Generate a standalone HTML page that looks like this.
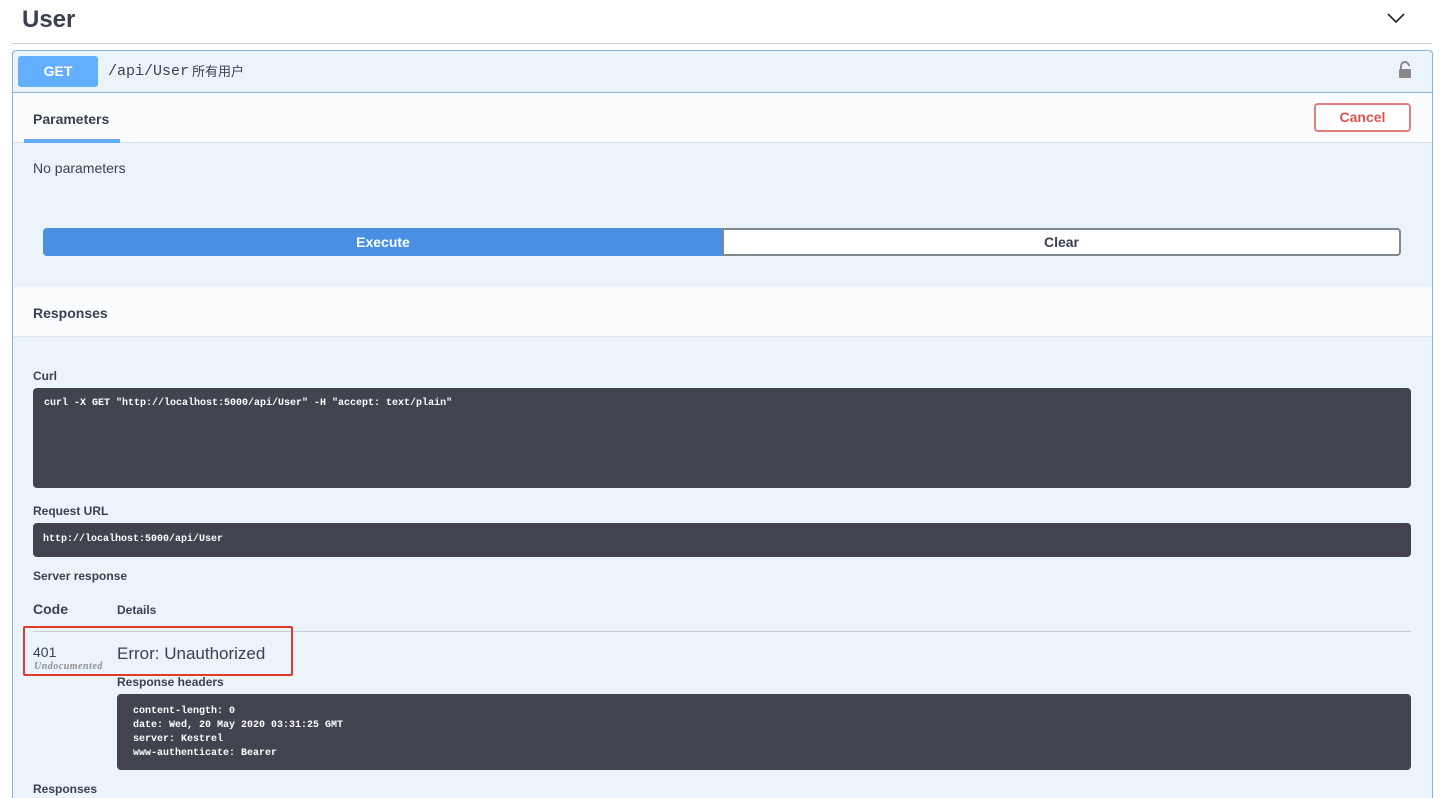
<!DOCTYPE html>
<html><head><meta charset="utf-8"><style>
*{box-sizing:border-box;margin:0;padding:0}
html,body{width:1446px;height:798px;overflow:hidden}
body{background:#fff;font-family:"Liberation Sans","Noto Sans CJK SC",sans-serif;color:#3b4151;position:relative}
.abs{position:absolute}
.mono{font-family:"Liberation Mono","Noto Sans CJK SC",monospace}
.dark{background:#41444e;border-radius:4px;color:#fff;font-family:"Liberation Mono",monospace;font-weight:bold;font-size:10px}
</style></head><body>
<div class="abs" style="left:22px;top:6px;font-size:24px;font-weight:bold;color:#3b4151">User</div>
<svg class="abs" style="left:1386px;top:10px" width="20" height="16" viewBox="0 0 20 16"><path d="M2 4l8 8 8-8" fill="none" stroke="#222" stroke-width="1.6"/></svg>
<div class="abs" style="left:12px;top:43px;width:1420px;height:1px;background:#c8cbd0"></div>
<div class="abs" style="left:12px;top:50px;width:1421px;height:748px;border:1px solid #8fb4d6;border-bottom:none;border-radius:4px 4px 0 0;background:#ebf3fb"></div>
<div class="abs" style="left:13px;top:92px;width:1419px;height:1px;background:#8fb4d6"></div>
<div class="abs" style="left:18px;top:56px;width:80px;height:31px;background:#61affe;border-radius:3px;color:#fff;font-weight:bold;font-size:14px;text-align:center;line-height:31px">GET</div>
<div class="abs mono" style="left:108px;top:63px;font-size:15px;color:#3b4151">/api/User</div>
<div class="abs" style="left:192px;top:63px;font-size:13px;line-height:18px;color:#3b4151">所有用户</div>
<svg class="abs" style="left:1397px;top:60px" width="16" height="20" viewBox="0 0 16 20"><path d="M4 9V6a4 4 0 0 1 8 0" fill="none" stroke="#888" stroke-width="2"/><rect x="2" y="9" width="12" height="9" rx="1" fill="#888"/></svg>
<div class="abs" style="left:13px;top:93px;width:1419px;height:50px;background:#fafcfe;border-bottom:1px solid #d9e3ee"></div>
<div class="abs" style="left:33px;top:111px;font-size:14px;font-weight:bold">Parameters</div>
<div class="abs" style="left:24px;top:139px;width:96px;height:4px;background:#61affe"></div>
<div class="abs" style="left:1314px;top:103px;width:97px;height:29px;border:2px solid #e27e7e;border-radius:4px;color:#e05353;font-weight:bold;font-size:14px;text-align:center;line-height:25px;background:#fff">Cancel</div>
<div class="abs" style="left:33px;top:160px;font-size:14px">No parameters</div>
<div class="abs" style="left:43px;top:228px;width:680px;height:28px;background:#4990e2;border-radius:4px 0 0 4px;color:#fff;font-weight:bold;font-size:14px;text-align:center;line-height:28px">Execute</div>
<div class="abs" style="left:722px;top:228px;width:679px;height:28px;border:2px solid #808890;border-radius:0 4px 4px 0;background:#fff;font-weight:bold;font-size:14px;text-align:center;line-height:24px">Clear</div>
<div class="abs" style="left:13px;top:287px;width:1419px;height:50px;background:#fafcfe;border-bottom:1px solid #d9e3ee"></div>
<div class="abs" style="left:33px;top:305px;font-size:14px;font-weight:bold">Responses</div>
<div class="abs" style="left:33px;top:369px;font-size:12px;font-weight:bold">Curl</div>
<div class="abs dark" style="left:33px;top:388px;width:1378px;height:100px;padding:10px 11px">curl -X GET "http://localhost:5000/api/User" -H "accept: text/plain"</div>
<div class="abs" style="left:33px;top:504px;font-size:12px;font-weight:bold">Request URL</div>
<div class="abs dark" style="left:33px;top:523px;width:1378px;height:34px;padding:11px 10px">http://localhost:5000/api/User</div>
<div class="abs" style="left:33px;top:569px;font-size:12px;font-weight:bold">Server response</div>
<div class="abs" style="left:33px;top:601px;font-size:14px;font-weight:bold">Code</div>
<div class="abs" style="left:117px;top:603px;font-size:12px;font-weight:bold">Details</div>
<div class="abs" style="left:33px;top:631px;width:1378px;height:1px;background:#c5ccd5"></div>
<div class="abs" style="left:33px;top:644px;font-size:14px">401</div>
<div class="abs" style="left:34px;top:661px;font-size:10px;font-style:italic;font-weight:bold;color:#909090;font-family:'Liberation Serif',serif;letter-spacing:0.5px">Undocumented</div>
<div class="abs" style="left:117px;top:644px;font-size:17px">Error: Unauthorized</div>
<div class="abs" style="left:23px;top:626px;width:270px;height:50px;border:2px solid #e03a2e;border-radius:2px"></div>
<div class="abs" style="left:117px;top:675px;font-size:12px;font-weight:bold">Response headers</div>
<div class="abs dark" style="left:117px;top:694px;width:1294px;height:76px;padding:11px 16px;line-height:14px">content-length: 0<br>date: Wed, 20 May 2020 03:31:25 GMT<br>server: Kestrel<br>www-authenticate: Bearer</div>
<div class="abs" style="left:33px;top:782px;font-size:12px;font-weight:bold">Responses</div>
</body></html>
